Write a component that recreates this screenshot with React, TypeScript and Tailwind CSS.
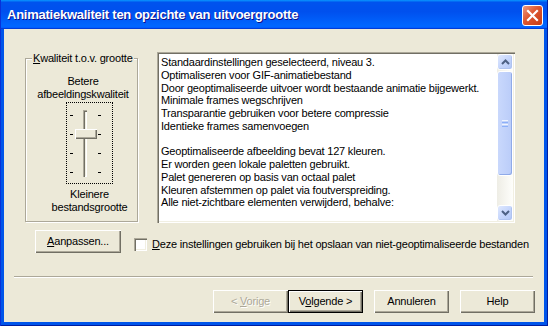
import React from "react";

const raised =
  "shadow-[inset_1px_1px_0_#ffffff,inset_-1px_-1px_0_#716F64,inset_-2px_-2px_0_#ACA899]";

function Btn({
  children,
  className = "",
  def = false,
  disabled = false,
}: {
  children: React.ReactNode;
  className?: string;
  def?: boolean;
  disabled?: boolean;
}) {
  return (
    <div
      className={`h-[23px] w-[75px] shrink-0 flex items-center justify-center bg-[#ECE9D8] ${
        def ? "border border-black" : ""
      } ${raised} ${
        disabled ? "text-[#ACA899] [text-shadow:1px_1px_0_#ffffff]" : "text-black"
      } ${className}`}
    >
      <span className="leading-none whitespace-nowrap">{children}</span>
    </div>
  );
}

const lines1 = [
  "Standaardinstellingen geselecteerd, niveau 3.",
  "Optimaliseren voor GIF-animatiebestand",
  "Door geoptimaliseerde uitvoer wordt bestaande animatie bijgewerkt.",
  "Minimale frames wegschrijven",
  "Transparantie gebruiken voor betere compressie",
  "Identieke frames samenvoegen",
  "\u00a0",
  "Geoptimaliseerde afbeelding bevat 127 kleuren.",
  "Er worden geen lokale paletten gebruikt.",
  "Palet genereren op basis van octaal palet",
  "Kleuren afstemmen op palet via foutverspreiding.",
  "Alle niet-zichtbare elementen verwijderd, behalve:",
];

function ScrollBtn({ up }: { up: boolean }) {
  return (
    <div className="h-[16px] shrink-0 w-full rounded-[3px] border border-white bg-[linear-gradient(135deg,#E0E9FE_0%,#C6D6FC_50%,#B2C7F7_100%)] shadow-[inset_-1px_-1px_0_#AFC3F0] flex items-center justify-center">
      <svg width="9" height="6" viewBox="0 0 9 6">
        <polyline
          points={up ? "1,5 4.5,1.5 8,5" : "1,1 4.5,4.5 8,1"}
          fill="none"
          stroke="#4D6185"
          strokeWidth="2"
        />
      </svg>
    </div>
  );
}

export default function App() {
  return (
    <div className="w-[548px] h-[326px] flex flex-col font-['Liberation_Sans',Arial,sans-serif] text-[11px] tracking-[-0.2px] text-black overflow-hidden">
      {/* Title bar */}
      <div className="h-[29px] shrink-0 flex items-center justify-between pl-[7px] pr-[5px] bg-[linear-gradient(to_bottom,#0997ff,#0053ee_8%,#0050ee_40%,#0066ff_88%,#0066ff_93%,#005bff_95%,#003dd7_96%,#003dd7)] shadow-[inset_1px_0_0_#0831D9,inset_-1px_0_0_#001EA0]">
        <span className="text-white font-bold text-[13px] tracking-[-0.25px] whitespace-nowrap [text-shadow:1px_1px_0_#0F1089]">
          Animatiekwaliteit ten opzichte van uitvoergrootte
        </span>
        <div className="mt-[2px] w-[21px] h-[21px] rounded-[3px] border border-white bg-[linear-gradient(135deg,#EE9A80_0%,#DD5630_45%,#C63C16_100%)] flex items-center justify-center">
          <svg width="19" height="19" viewBox="0 0 19 19">
            <line x1="5" y1="5" x2="14" y2="14" stroke="white" strokeWidth="2.2" strokeLinecap="square" />
            <line x1="14" y1="5" x2="5" y2="14" stroke="white" strokeWidth="2.2" strokeLinecap="square" />
          </svg>
        </div>
      </div>

      {/* Frame */}
      <div className="flex-1 min-h-0 flex flex-col px-[4px] pb-[4px] bg-[#0055EA] shadow-[inset_1px_0_0_#0831D9,inset_-1px_0_0_#001EA0,inset_0_-1px_0_#001EA0]">
        <div className="flex-1 min-h-0 flex flex-col bg-[#ECE9D8]">
          <div className="pt-[23px] pl-[21px] pr-[29px] flex flex-col">
            {/* Row 1 */}
            <div className="flex h-[171px] gap-[19px]">
              <fieldset className="w-[113px] h-[170px] shrink-0 border border-[#ACA899] shadow-[inset_1px_1px_0_#ffffff,1px_1px_0_#ffffff] flex flex-col">
                <legend className="ml-[6px] px-[1px] leading-[13px] whitespace-nowrap bg-[#ECE9D8]">
                  <u>K</u>waliteit t.o.v. grootte
                </legend>
                <div className="mt-[10px] pl-[3px] text-center leading-[12.5px] whitespace-nowrap">
                  <div>Betere</div>
                  <div>afbeeldingskwaliteit</div>
                </div>
                <div className="mt-[2px] ml-[40px] w-[47px] h-[82px] shrink-0 border border-dotted border-black relative">
                  {/* ticks */}
                  <div className="absolute left-[3px] top-[12px] flex flex-col gap-[18px]">
                    {[0, 1, 2, 3].map((i) => (
                      <div key={i} className="w-[3px] h-[1px] bg-black" />
                    ))}
                  </div>
                  <div className="absolute left-[31px] top-[12px] flex flex-col gap-[18px]">
                    {[0, 1, 2, 3].map((i) => (
                      <div key={i} className="w-[3px] h-[1px] bg-black" />
                    ))}
                  </div>
                  {/* track */}
                  <div className="absolute left-[16px] top-[7px] w-[4px] h-[67px] shadow-[inset_1px_1px_0_#ACA899,inset_2px_2px_0_#716F64,inset_-1px_-1px_0_#ffffff,inset_-2px_-2px_0_#F1EFE2] bg-[#ECE9D8]" />
                  {/* thumb */}
                  <div className={`absolute left-[8px] top-[26px] w-[22px] h-[10px] bg-[#ECE9D8] ${raised}`} />
                </div>
                <div className="mt-[4px] pl-[16px] text-center leading-[12.5px] whitespace-nowrap">
                  <div>Kleinere</div>
                  <div>bestandsgrootte</div>
                </div>
              </fieldset>

              {/* Text box */}
              <div className="flex-1 min-w-0 h-[171px] p-[2px] bg-white flex shadow-[inset_1px_1px_0_#ACA899,inset_2px_2px_0_#716F64,inset_-1px_-1px_0_#ffffff,inset_-2px_-2px_0_#F1EFE2]">
                <div className="flex-1 min-w-0 overflow-hidden pl-[2px] pt-[2px] leading-[12.75px] whitespace-nowrap">
                  {lines1.map((l, i) => (
                    <div key={i}>{l}</div>
                  ))}
                </div>
                <div className="w-[16px] shrink-0 flex flex-col bg-[linear-gradient(to_right,#EEEDE5,#FEFEFB)]">
                  <ScrollBtn up />
                  <div className="mt-[1px] h-[105px] shrink-0 rounded-[3px] border border-white bg-[linear-gradient(to_right,#C9D8FC,#BACCF9)] shadow-[inset_-1px_-1px_0_#8FAAE8] flex flex-col items-center justify-center gap-[1px]">
                    <div className="w-[6px] h-[1px] bg-[#EEF4FE]" />
                    <div className="w-[6px] h-[1px] bg-[#8CB0F8]" />
                    <div className="w-[6px] h-[1px] bg-[#EEF4FE]" />
                    <div className="w-[6px] h-[1px] bg-[#8CB0F8]" />
                  </div>
                  <div className="flex-1" />
                  <ScrollBtn up={false} />
                </div>
              </div>
            </div>

            {/* Row 2 */}
            <div className="flex h-[23px] mt-[7px] pl-[10px]">
              <Btn className="w-[86px]">
                <u>A</u>anpassen...
              </Btn>
              <div className="ml-[13px] mt-[8px] h-[13px] flex items-center gap-[5px] whitespace-nowrap">
                <div className="w-[13px] h-[13px] shrink-0 bg-white shadow-[inset_1px_1px_0_#ACA899,inset_2px_2px_0_#716F64,inset_-1px_-1px_0_#ffffff,inset_-2px_-2px_0_#F1EFE2]" />
                <span className="leading-[13px]">
                  <u>D</u>eze instellingen gebruiken bij het opslaan van niet-geoptimaliseerde bestanden
                </span>
              </div>
            </div>
          </div>

          {/* Separator */}
          <div className="mt-[23px] ml-[10px] mr-[11px] h-[2px] border-t border-t-[#ACA899] border-b border-b-white" />

          {/* Buttons */}
          <div className="mt-[12px] flex justify-end pr-[9px]">
            <Btn disabled>
              &lt; <u>V</u>orige
            </Btn>
            <Btn def>
              V<u>o</u>lgende &gt;
            </Btn>
            <Btn className="ml-[11px]">Annuleren</Btn>
            <Btn className="ml-[11px]">Help</Btn>
          </div>
        </div>
      </div>
    </div>
  );
}
